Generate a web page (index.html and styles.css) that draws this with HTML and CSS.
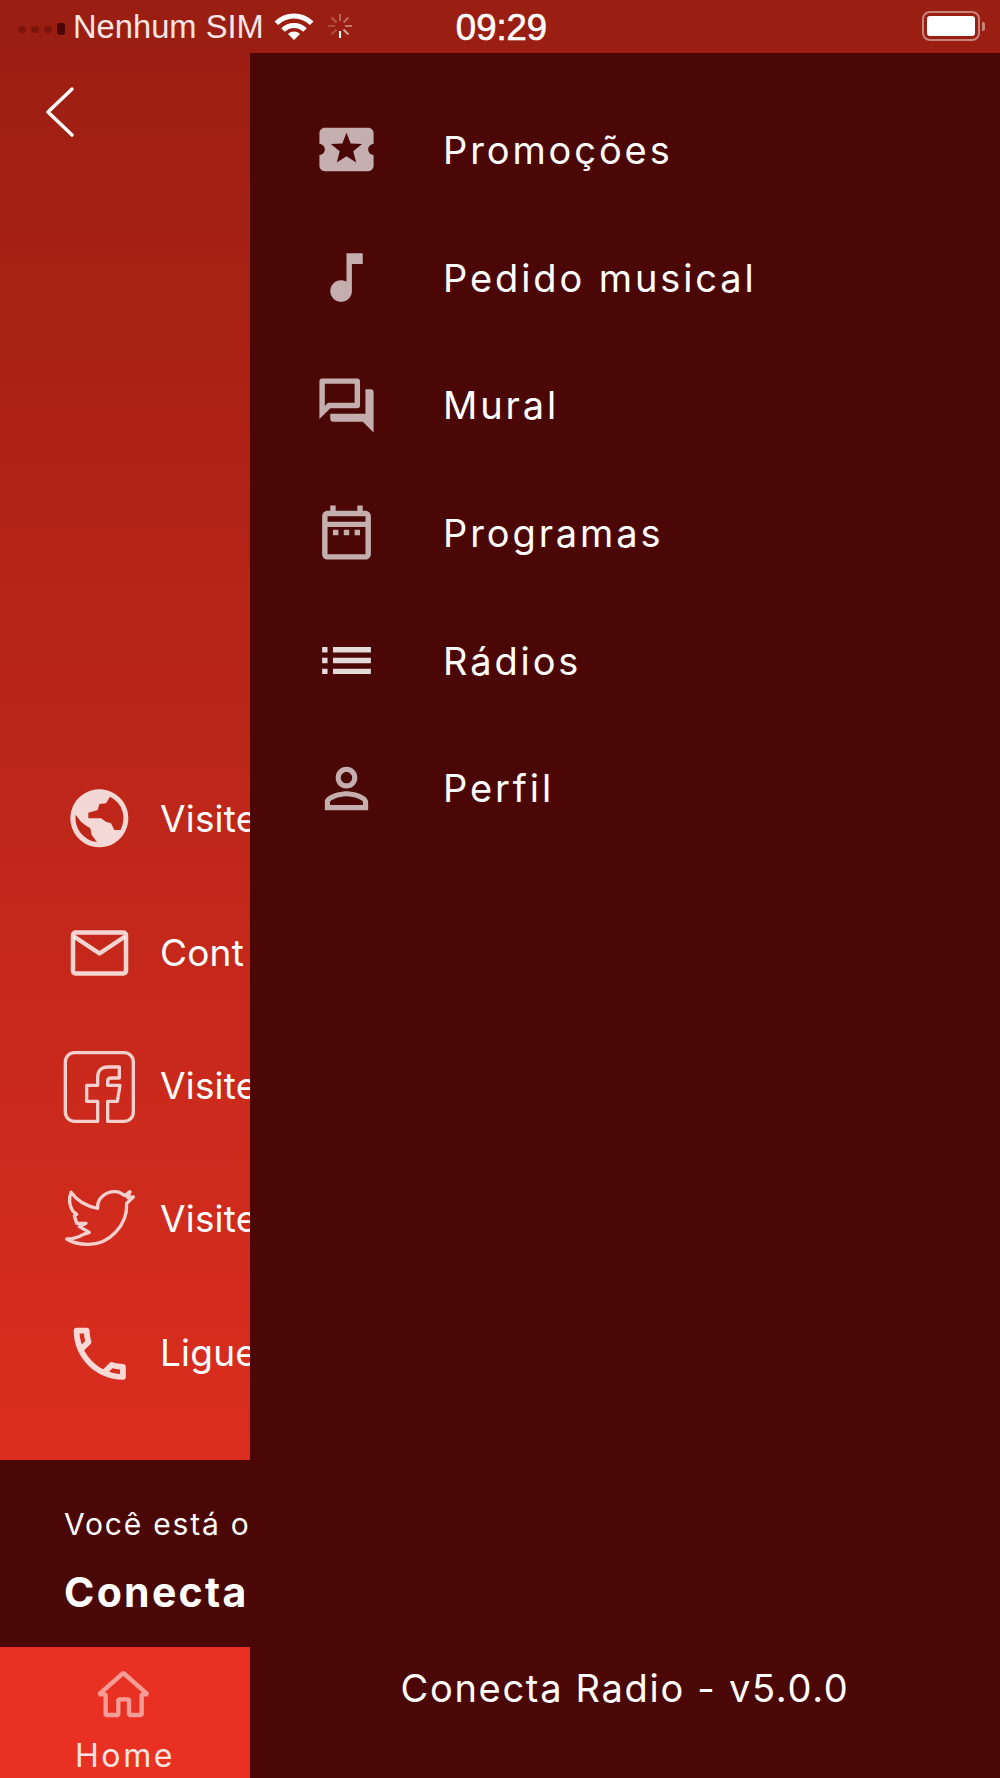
FILE: index.html
```html
<!DOCTYPE html>
<html lang="pt">
<head>
<meta charset="utf-8">
<title>Conecta Radio</title>
<link rel="stylesheet" href="styles.css">
</head>
<body>
<div class="app">
  <header class="status">
    <div class="status-left">
      <div class="signal"><i class="dot"></i><i class="dot"></i><i class="dot"></i><i class="dot dot-strong"></i></div>
      <span class="carrier">Nenhum SIM</span>
      <svg class="wifi" viewBox="0 0 40 28"><path class="wifi-arc" d="M2.3 11.3A25 25 0 0 1 37.7 11.3"/><path class="wifi-arc" d="M9 18A15.5 15.5 0 0 1 31 18"/><path class="wifi-tip" d="M20 28L14 22A8.5 8.5 0 0 1 26 22Z"/></svg>
      <svg class="spinner" viewBox="0 0 26 26">
        <path d="M13 1v7" stroke-opacity=".3"/><path d="M21.5 4.5l-5 5" stroke-opacity=".35"/><path d="M25 13h-7" stroke-opacity=".4"/><path d="M21.5 21.5l-5-5" stroke-opacity=".6"/><path d="M13 25v-7" stroke-opacity="1"/><path d="M4.5 21.5l5-5" stroke-opacity=".2"/><path d="M1 13h7" stroke-opacity=".2"/><path d="M4.5 4.5l5 5" stroke-opacity=".25"/>
      </svg>
    </div>
    <time class="clock">09:29</time>
    <div class="battery"><div class="battery-body"><div class="battery-fill"></div></div><div class="battery-nub"></div></div>
  </header>

  <div class="stage">
    <section class="hero">
      <button class="back" aria-label="Voltar"><svg class="back-icon" viewBox="0 0 32 52"><path d="M28 3L4 26l24 23"/></svg></button>
      <ul class="links">
        <li class="link">
          <span class="link-icon"><svg class="glyph" viewBox="0 0 240 240"><path class="fill-soft" fill-rule="evenodd" d="M115 28a87 87 0 1 0 .01 0ZM147 50L135 70 115 72 110 90 82 98V115H120L135 125 150 130 160 150H178A72 72 0 0 0 147 50ZM44 105L60 125 72 135 88 145 92 165 108 186A72 72 0 0 1 44 105Z"/></svg></span>
          <span class="link-label">Visite</span>
        </li>
        <li class="link">
          <span class="link-icon"><svg class="glyph" viewBox="0 0 80 80"><rect class="line-soft" x="12" y="19.500" width="53" height="41" rx="2.5"/><path class="line-soft" d="M13 23.500L38.500 40.500 64 23.500"/></svg></span>
          <span class="link-label">Cont</span>
        </li>
        <li class="link">
          <span class="link-icon"><svg class="glyph glyph-fb" viewBox="0 0 270 270"><path class="line-thin" d="M125 238V178H92V130H125V105C125 85 138 75 155 75H190V108H166C158 108 155 112 155 118V130H192L184 178H155V238H204C220 238 232 226 232 210V60C232 44 220 32 204 32H56C40 32 28 44 28 60V210C28 226 40 238 56 238Z"/></svg></span>
          <span class="link-label">Visite</span>
        </li>
        <li class="link">
          <span class="link-icon"><svg class="glyph glyph-fb" viewBox="0 0 270 270"><path class="line-thin" d="M45 52C65 80 95 95 125 100C122 70 150 48 180 50C192 50 200 58 207 62L222 50 215 68 232 66 212 85C215 150 160 210 95 208C70 208 50 203 32 192C50 192 65 188 82 178L100 172 70 155 90 145 62 145 55 122 62 118 50 108C40 90 38 70 45 52Z"/></svg></span>
          <span class="link-label">Visite</span>
        </li>
        <li class="link">
          <span class="link-icon"><svg class="glyph glyph-phone" viewBox="0 0 24 24"><path class="fill-soft" d="M6.54 5c.06.89.21 1.76.45 2.59l-1.2 1.2c-.41-1.2-.67-2.47-.76-3.79h1.51m9.86 12.02c.85.24 1.72.39 2.6.45v1.49c-1.32-.09-2.59-.35-3.8-.75l1.2-1.19M7.5 3H4c-.55 0-1 .45-1 1 0 9.39 7.61 17 17 17 .55 0 1-.45 1-1v-3.49c0-.55-.45-1-1-1-1.24 0-2.45-.2-3.57-.57-.1-.04-.21-.05-.31-.05-.26 0-.51.1-.71.29l-2.2 2.2c-2.83-1.45-5.15-3.76-6.59-6.59l2.2-2.2c.28-.28.36-.67.25-1.02C8.7 6.45 8.5 5.25 8.5 4c0-.55-.45-1-1-1z"/></svg></span>
          <span class="link-label">Ligue</span>
        </li>
      </ul>
    </section>

    <section class="now">
      <p class="now-intro">Você está o</p>
      <p class="now-name">Conecta</p>
    </section>

    <nav class="tabs">
      <div class="tab">
        <svg class="tab-icon" viewBox="0 0 240 180"><path d="M42 100L115 36 188 100H170V162H132V115H100V162H62V100Z"/></svg>
        <span class="tab-label">Home</span>
      </div>
    </nav>

    <aside class="drawer">
      <ul class="menu">
        <li class="menu-item">
          <svg class="menu-icon" viewBox="0 0 24 24"><path d="M20 12c0-1.100.9-2 2-2V6c0-1.100-.9-2-2-2H4c-1.100 0-1.990.9-1.990 2v4c1.100 0 1.990.9 1.990 2s-.89 2-2 2v4c0 1.100.9 2 2 2h16c1.100 0 2-.9 2-2v-4c-1.100 0-2-.9-2-2zm-4.420 4.800L12 14.500l-3.580 2.300 1.080-4.120-3.290-2.690 4.240-.25L12 5.800l1.540 3.950 4.240.25-3.290 2.690 1.090 4.110z"/></svg>
          <span class="menu-label">Promoções</span>
        </li>
        <li class="menu-item">
          <svg class="menu-icon" viewBox="0 0 24 24"><path d="M12 3v10.550c-.59-.34-1.270-.55-2-.55-2.210 0-4 1.790-4 4s1.790 4 4 4 4-1.790 4-4V7h4V3h-6z"/></svg>
          <span class="menu-label">Pedido musical</span>
        </li>
        <li class="menu-item">
          <svg class="menu-icon" viewBox="0 0 24 24"><path d="M15 4v7H5.170L4 12.170V4h11m1-2H3c-.55 0-1 .45-1 1v14l4-4h10c.55 0 1-.45 1-1V3c0-.55-.45-1-1-1zm5 4h-2v9H6v2c0 .55.45 1 1 1h11l4 4V7c0-.55-.45-1-1-1z"/></svg>
          <span class="menu-label">Mural</span>
        </li>
        <li class="menu-item">
          <svg class="menu-icon" viewBox="0 0 24 24"><path d="M7 11h2v2H7v-2zm14-5v14c0 1.100-.9 2-2 2H5c-1.110 0-2-.9-2-2l.01-14c0-1.100.88-2 1.990-2h1V2h2v2h8V2h2v2h1c1.100 0 2 .9 2 2zM5 8h14V6H5v2zm14 12V10H5v10h14zm-4-7h2v-2h-2v2zm-4 0h2v-2h-2v2z"/></svg>
          <span class="menu-label">Programas</span>
        </li>
        <li class="menu-item">
          <svg class="menu-icon menu-icon-bright" viewBox="0 0 24 24"><path d="M3 13h2v-2H3v2zm0 4h2v-2H3v2zm0-8h2V7H3v2zm4 4h14v-2H7v2zm0 4h14v-2H7v2zm0-10v2h14V7H7z"/></svg>
          <span class="menu-label">Rádios</span>
        </li>
        <li class="menu-item">
          <svg class="menu-icon" viewBox="0 0 24 24"><path d="M12 5.900c1.160 0 2.100.94 2.100 2.100s-.94 2.100-2.100 2.100S9.900 9.160 9.900 8s.94-2.100 2.100-2.100m0 9c2.970 0 6.100 1.460 6.100 2.100v1.100H5.900V17c0-.64 3.130-2.100 6.100-2.100M12 4C9.790 4 8 5.790 8 8s1.790 4 4 4 4-1.790 4-4-1.790-4-4-4zm0 9c-2.670 0-8 1.340-8 4v3h16v-3c0-2.660-5.330-4-8-4z"/></svg>
          <span class="menu-label">Perfil</span>
        </li>
      </ul>
      <p class="version">Conecta Radio - v5.0.0</p>
    </aside>
  </div>
</div>
</body>
</html>
```

FILE: styles.css
```css
* { box-sizing: border-box; }
html, body { margin: 0; padding: 0; }
body { background: #4a0705; color: #fff; font-family: "Inter", "Liberation Sans", sans-serif; }
ul { list-style: none; margin: 0; padding: 0; }
p { margin: 0; }

.app { width: 1000px; height: 1778px; display: flex; flex-direction: column; overflow: hidden; background: linear-gradient(180deg, #9b1e12 0%, #e83122 100%); }

/* status bar */
.status { height: 53px; flex: none; background: #9b1e12; display: grid; grid-template-columns: 1fr auto 1fr; align-items: center; font-family: "Liberation Sans", Arial, sans-serif; padding: 0 15px 0 18px; }
.status-left { display: flex; align-items: center; }
.signal { display: flex; align-items: center; gap: 5px; width: 55px; margin-top: 5px; }
.dot { width: 8px; height: 7px; border-radius: 3px; background: rgba(60, 5, 3, .32); }
.dot-strong { height: 12px; background: #4a0705; }
.carrier { font-size: 32.700px; color: #f4e6e4; }
.wifi { width: 40px; height: 28px; margin-left: 10px; margin-top: -2px; }
.wifi-arc { fill: none; stroke: #fff; stroke-width: 5; }
.wifi-tip { fill: #fff; }
.spinner { width: 26px; height: 26px; margin-left: 13px; margin-top: -1px; fill: none; stroke: #fff; stroke-width: 2; }
.clock { font-size: 36.500px; font-weight: 400; line-height: 42px; padding-top: 2px; -webkit-text-stroke: .6px #fff; color: #fff; text-align: center; }
.battery { justify-self: end; display: flex; align-items: center; margin-top: -1px; }
.battery-body { width: 58px; height: 30px; border: 2.500px solid rgba(255, 255, 255, .45); border-radius: 8px; padding: 3px; }
.battery-fill { width: 100%; height: 100%; background: #fff; border-radius: 3px; }
.battery-nub { width: 3px; height: 9px; margin-left: 2px; background: rgba(255, 255, 255, .45); border-radius: 0 2px 2px 0; }

/* stage */
.stage { position: relative; flex: 1; display: flex; flex-direction: column; min-height: 0; }
.hero { flex: 1; display: flex; flex-direction: column; padding-bottom: 40px; }
.back { width: 32px; height: 52px; padding: 0; margin: 33px 0 0 44px; background: none; border: 0; }
.back-icon { display: block; width: 32px; height: 52px; fill: none; stroke: #fff; stroke-width: 3.500; stroke-linecap: round; stroke-linejoin: round; }
.links { margin-top: auto; display: flex; flex-direction: column; }
.link { height: 133.400px; display: flex; align-items: center; padding-left: 60.500px; gap: 19.500px; }
.link-icon { width: 80px; height: 80px; display: flex; align-items: center; justify-content: center; flex: none; }
.glyph { width: 80px; height: 80px; display: block; flex: none; }
.glyph-fb { width: 90px; height: 90px; }
.glyph-phone { width: 69.500px; height: 69.500px; margin-left: -2px; }
.link-label { font-size: 37px; letter-spacing: .2px; white-space: nowrap; padding-bottom: 2px; }
.fill-soft { fill: rgba(255, 255, 255, .82); }
.line-soft { fill: none; stroke: rgba(255, 255, 255, .8); stroke-width: 4.500; stroke-linejoin: round; }
.line-thin { fill: none; stroke: rgba(255, 255, 255, .78); stroke-width: 10; stroke-linejoin: round; }

.now { height: 187px; flex: none; background: #4a0705; padding: 46px 0 0 64px; }
.now-intro { font-size: 30px; letter-spacing: 1.800px; line-height: 36px; white-space: nowrap; }
.now-name { font-size: 41px; letter-spacing: 2.300px; font-weight: 700; line-height: 48px; margin-top: 26px; white-space: nowrap; }

.tabs { height: 131px; flex: none; background: #e83122; display: flex; }
.tab { width: 250px; display: flex; flex-direction: column; align-items: center; padding-top: 14px; }
.tab-icon { width: 80px; height: 60px; fill: none; stroke: rgba(255, 255, 255, .52); stroke-width: 13; stroke-linejoin: bevel; }
.tab-label { font-size: 32px; letter-spacing: 2.600px; line-height: 36px; margin-top: 17px; color: #fbe3e0; }

/* drawer over the page */
.drawer { position: absolute; top: 0; bottom: 0; left: 250px; right: 0; background: #4a0705; display: flex; flex-direction: column; padding-top: 33px; }
.menu { flex: 1; padding-left: 64px; }
.menu-item { height: 127.700px; display: flex; align-items: center; gap: 64px; }
.menu-icon { width: 65px; height: 65px; flex: none; fill: rgba(255, 255, 255, .68); }
.menu-icon-bright { fill: rgba(255, 255, 255, .85); }
.menu-label { font-size: 38px; letter-spacing: 2.900px; white-space: nowrap; }
.version { font-size: 38px; letter-spacing: 1.700px; text-align: center; line-height: 46px; margin-bottom: 67px; }
```
